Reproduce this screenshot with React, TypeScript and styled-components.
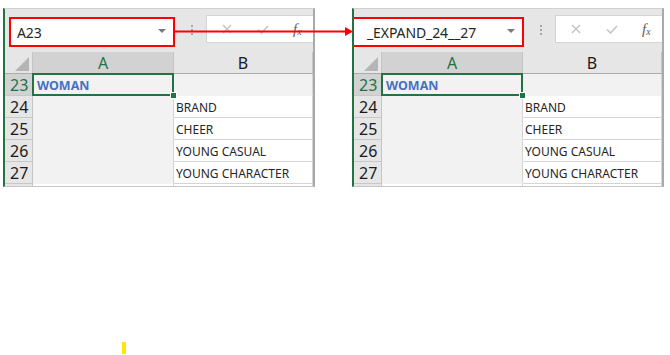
import styled, { createGlobalStyle } from "styled-components";

const GlobalStyle = createGlobalStyle`
  html, body {
    margin: 0;
    padding: 0;
    background: #ffffff;
    font-family: "Noto Sans", "Open Sans", Arial, sans-serif;
  }
  * {
    box-sizing: border-box;
  }
`;

interface SheetProps {
  name: string;
  nameOffset: number;
  nameWidth: number;
  namePad: number;
}

const rows = [
  { num: 23, a: "WOMAN", b: "" },
  { num: 24, a: "", b: "BRAND" },
  { num: 25, a: "", b: "CHEER" },
  { num: 26, a: "", b: "YOUNG CASUAL" },
  { num: 27, a: "", b: "YOUNG CHARACTER" },
];

const CrossIcon = () => (
  <svg width="10" height="10" viewBox="0 0 10 10">
    <path d="M1 1 L9 9 M9 1 L1 9" stroke="#c4c4c4" strokeWidth="1.4" fill="none" />
  </svg>
);

const CheckIcon = () => (
  <svg width="12" height="9" viewBox="0 0 12 9">
    <path d="M1 4.5 L4.5 8 L11 1" stroke="#c4c4c4" strokeWidth="1.6" fill="none" />
  </svg>
);

const Sheet = ({ name, nameOffset, nameWidth, namePad }: SheetProps) => (
  <Panel>
    <FormulaBar>
      <NameBox $offset={nameOffset} $width={nameWidth} $pad={namePad}>
        <NameText>{name}</NameText>
        <DropArrow />
      </NameBox>
      <Grip>
        <Dot />
        <Dot />
        <Dot />
      </Grip>
      <FormulaBox>
        <CrossIcon />
        <CheckIcon />
        <Fx>
          f<sub>x</sub>
        </Fx>
      </FormulaBox>
    </FormulaBar>
    <Grid>
      <Corner>
        <CornerMark />
      </Corner>
      <ColHeader $selected>A</ColHeader>
      <ColHeader>B</ColHeader>
      {rows.map((r, i) => (
        <Row key={r.num}>
          <RowHeader $selected={i === 0}>{r.num}</RowHeader>
          <Cell $fill>
            {i === 0 && (
              <>
                <Title>{r.a}</Title>
                <Selection>
                  <Handle />
                </Selection>
              </>
            )}
          </Cell>
          <Cell $fill={i === 0}>{r.b}</Cell>
        </Row>
      ))}
      <Row>
        <RowHeader />
        <Cell />
        <Cell />
      </Row>
    </Grid>
  </Panel>
);

const App = () => (
  <>
    <GlobalStyle />
    <Page>
      <Panels>
        <Sheet name="A23" nameOffset={4} nameWidth={166} namePad={6} />
        <Sheet name="_EXPAND_24__27" nameOffset={-2} nameWidth={172} namePad={13} />
        <Arrow>
          <svg width="180" height="10" viewBox="0 0 180 10">
            <line x1="0" y1="4.5" x2="171" y2="4.5" stroke="#ff0000" strokeWidth="2" />
            <polygon points="170,0 178,4.5 170,9" fill="#ff0000" />
          </svg>
        </Arrow>
      </Panels>
      <Caret />
    </Page>
  </>
);

const Page = styled.div`
  width: 670px;
  height: 355px;
  padding-top: 8px;
  overflow: hidden;
`;

const Panels = styled.div`
  position: relative;
  display: flex;
  gap: 37px;
  padding-left: 3px;
`;

const Arrow = styled.div`
  position: absolute;
  left: 175px;
  top: 19px;
  line-height: 0;
`;

const Panel = styled.div`
  width: 312px;
  height: 179px;
  border-left: 2px solid #217346;
  border-top: 1px solid #d0d0d0;
  border-right: 2px solid #a9a9a9;
  border-bottom: 1px solid #c6c6c6;
  background: #e6e6e6;
  display: flex;
  flex-direction: column;
  overflow: hidden;
`;

const FormulaBar = styled.div`
  height: 43px;
  display: flex;
  align-items: flex-start;
  flex-shrink: 0;
`;

const NameBox = styled.div<{ $offset: number; $width: number; $pad: number }>`
  position: relative;
  z-index: 2;
  margin-left: ${(p) => p.$offset}px;
  margin-top: 8px;
  width: ${(p) => p.$width}px;
  height: 30px;
  flex-shrink: 0;
  border: 2px solid #ff0000;
  background: #ffffff;
  display: flex;
  align-items: center;
  justify-content: space-between;
  padding: 0 7px 0 ${(p) => p.$pad}px;
`;

const NameText = styled.span`
  font-size: 14px;
  color: #262626;
  letter-spacing: -0.1px;
`;

const DropArrow = styled.span`
  width: 0;
  height: 0;
  border-left: 4px solid transparent;
  border-right: 4px solid transparent;
  border-top: 4px solid #7a7a7a;
  margin-bottom: 2px;
`;

const Grip = styled.div`
  margin: 16px 0 0 16px;
  display: flex;
  flex-direction: column;
  gap: 2px;
  flex-shrink: 0;
`;

const Dot = styled.span`
  width: 2px;
  height: 2px;
  background: #a6a6a6;
`;

const FormulaBox = styled.div`
  margin: 6px 0 0 13px;
  height: 28px;
  flex: 1;
  min-width: 120px;
  background: #ffffff;
  border: 1px solid #d4d4d4;
  display: flex;
  align-items: center;
  gap: 25px;
  padding-left: 15px;
`;

const Fx = styled.span`
  font-family: "Liberation Serif", "DejaVu Serif", serif;
  font-style: italic;
  font-size: 15px;
  color: #5e5e5e;
  line-height: 1;
  margin-left: -1px;

  sub {
    font-size: 10px;
    vertical-align: -1px;
  }
`;

const Grid = styled.div`
  display: grid;
  grid-template-columns: 28px 141px 1fr;
  grid-auto-rows: 22px;
  background: #ffffff;
  flex: 1;
`;

const Corner = styled.div`
  position: relative;
  background: #e6e6e6;
  border-right: 1px solid #c4c4c4;
  border-bottom: 1px solid #ababab;
`;

const CornerMark = styled.span`
  position: absolute;
  right: 3px;
  bottom: 2px;
  width: 0;
  height: 0;
  border-left: 14px solid transparent;
  border-bottom: 14px solid #b5b5b5;
`;

const ColHeader = styled.div<{ $selected?: boolean }>`
  background: ${(p) => (p.$selected ? "#d2d2d2" : "#e6e6e6")};
  color: ${(p) => (p.$selected ? "#217346" : "#1a1a1a")};
  border-right: 1px solid #c4c4c4;
  border-bottom: 1px solid #ababab;
  font-size: 16px;
  display: flex;
  align-items: center;
  justify-content: center;
  padding-top: 1px;
`;

const Row = styled.div`
  display: contents;
`;

const RowHeader = styled.div<{ $selected?: boolean }>`
  background: ${(p) => (p.$selected ? "#d2d2d2" : "#e6e6e6")};
  color: ${(p) => (p.$selected ? "#217346" : "#1a1a1a")};
  border-right: 1px solid #c4c4c4;
  border-bottom: 1px solid #c8c8c8;
  font-size: 16px;
  display: flex;
  align-items: center;
  padding-left: 5px;
`;

const Cell = styled.div<{ $fill?: boolean }>`
  position: relative;
  background: ${(p) => (p.$fill ? "#f2f2f2" : "#ffffff")};
  border-right: 1px solid #d4d4d4;
  border-bottom: 1px solid ${(p) => (p.$fill ? "#f2f2f2" : "#d4d4d4")};
  font-size: 12px;
  color: #262626;
  display: flex;
  align-items: center;
  padding: 2px 0 0 2px;
  white-space: nowrap;
`;

const Title = styled.span`
  font-weight: bold;
  color: #4472c4;
  font-size: 12.5px;
  padding-left: 2px;
`;

const Selection = styled.span`
  position: absolute;
  z-index: 3;
  left: -1px;
  top: -1px;
  right: -1px;
  bottom: -1px;
  border: 2px solid #217346;
`;

const Handle = styled.span`
  position: absolute;
  right: -5px;
  bottom: -5px;
  width: 7px;
  height: 7px;
  background: #217346;
  border: 1px solid #ffffff;
`;

const Caret = styled.div`
  margin: 155px 0 0 122px;
  width: 4px;
  height: 12px;
  background: #ffe600;
`;

export default App;
